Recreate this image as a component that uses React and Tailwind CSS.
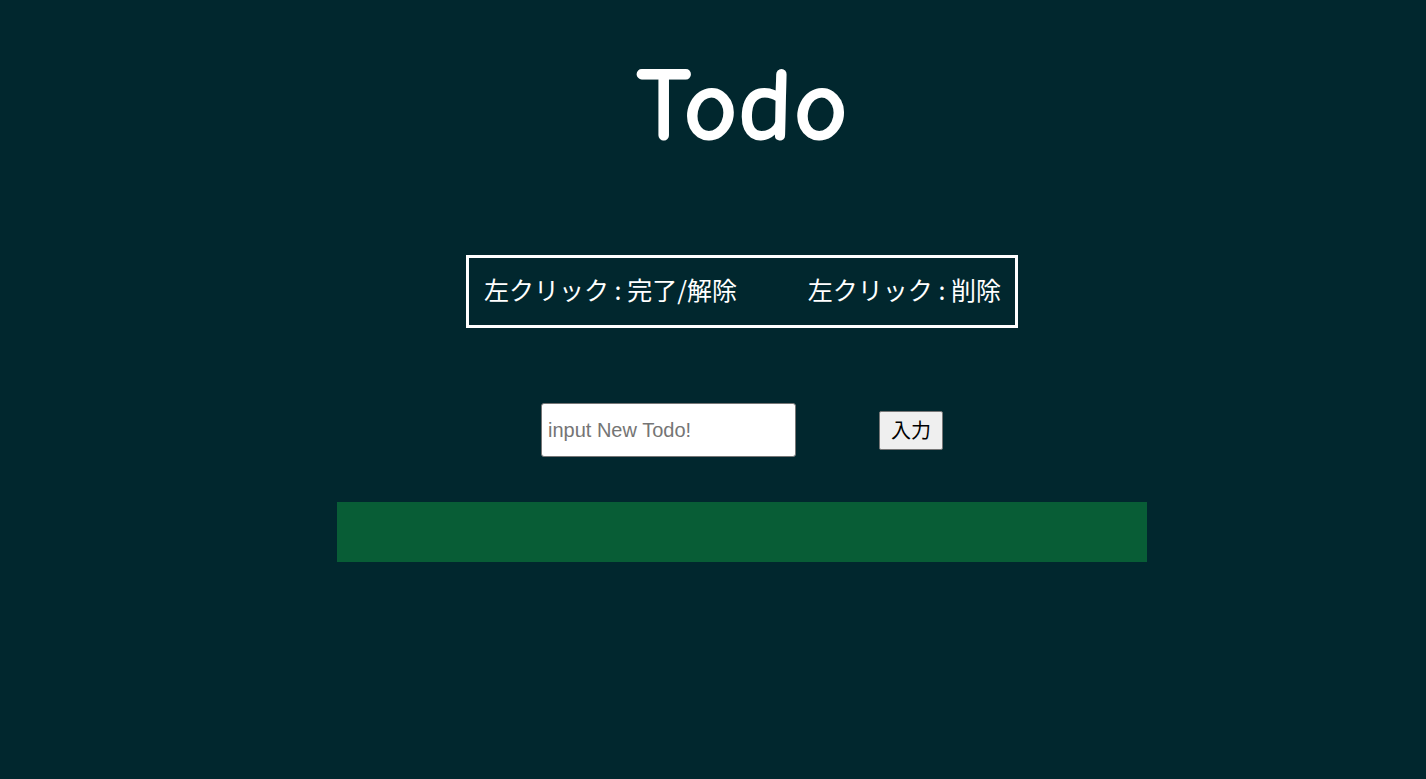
import React from "react";

export default function App() {
    return (
        <div className="min-h-screen bg-[#01272e] flex flex-col items-center pt-[50px] pl-[58px]">
            {/* Title */}
            <h1 className="text-[106px] leading-[112px] font-bold text-white font-['Comic_Sans_MS','Comic_Neue','Liberation_Sans',sans-serif]">
                Todo
            </h1>

            {/* Help box */}
            <div className="mt-[93px] w-[552px] h-[73px] border-[3px] border-white flex items-center justify-between pl-[15px] pr-[14px] pb-[4px] text-[25px] text-white font-['Noto_Sans_CJK_JP',sans-serif]">
                <span>左クリック : 完了/解除</span>
                <span>左クリック : 削除</span>
            </div>

            {/* Input row */}
            <div className="mt-[75px] flex items-center gap-[83px]">
                <input
                    type="text"
                    placeholder="input New Todo!"
                    className="w-[255px] h-[54px] bg-white rounded-[3px] border border-[#767676] px-[6px] text-[20px] text-black placeholder:text-[#757575] font-['Liberation_Sans',sans-serif] outline-none"
                />
                <button className="w-[64px] h-[39px] bg-[#efefef] border border-[#767676] rounded-[2px] text-[20px] text-black font-['Noto_Sans_CJK_JP',sans-serif]">
                    入力
                </button>
            </div>

            {/* Todo list */}
            <div className="mt-[45px] w-[810px] h-[60px] bg-[#085d36]"></div>
        </div>
    );
}
